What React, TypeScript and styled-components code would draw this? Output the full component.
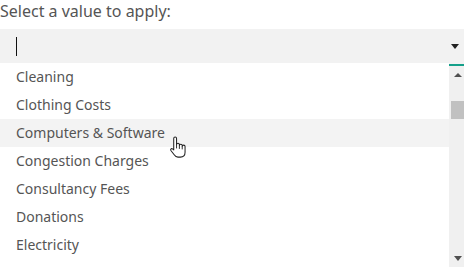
import React from "react";
import styled, { createGlobalStyle } from "styled-components";

const GlobalStyle = createGlobalStyle`
    body {
        margin: 0;
        background: #ffffff;
        font-family: "Noto Sans", "Open Sans", sans-serif;
    }
`

const options = [
    "Cleaning",
    "Clothing Costs",
    "Computers & Software",
    "Congestion Charges",
    "Consultancy Fees",
    "Donations",
    "Electricity",
]

const HandCursor = () => (
    <Hand width="17" height="22" viewBox="0 0 18 23">
        <path
            d="M5 2.5a1.5 1.5 0 0 1 3 0V9a1.5 1.5 0 0 1 3 0v1a1.5 1.5 0 0 1 3 0v1a1.5 1.5 0 0 1 3 0v6c0 3-2 5.2-5 5.2H9.5c-2 0-3-1-4-2.5L2 15.2c-.8-1.2.6-2.6 1.7-1.7L5 14.6Z"
            fill="#ffffff"
            stroke="#222222"
            strokeWidth="1.1"
            strokeLinejoin="round"
        />
        <path d="M8 9v4M11 10v3.5M14 11v3" stroke="#222222" strokeWidth="1" fill="none" />
    </Hand>
)

export default function App() {
    return (
        <>
            <GlobalStyle />
            <Page>
                <Label>Select a value to apply:</Label>
                <Field>
                    <Caret />
                    <Arrow $dir="down" />
                </Field>
                <List>
                    <Options>
                        {options.map((o, i) => (
                            <Option key={o} $active={i === 2}>
                                {o}
                                {i === 2 && <HandCursor />}
                            </Option>
                        ))}
                    </Options>
                    <Scrollbar>
                        <ScrollButton>
                            <Arrow $dir="up" $small />
                        </ScrollButton>
                        <Track>
                            <Thumb />
                        </Track>
                        <ScrollButton>
                            <Arrow $dir="down" $small />
                        </ScrollButton>
                    </Scrollbar>
                </List>
            </Page>
        </>
    );
}

const Page = styled.div`
    width: 464px;
    height: 267px;
    overflow: hidden;
    color: #555555;
`

const Label = styled.div`
    height: 29px;
    font-size: 16px;
    line-height: 22px;
    color: #555555;
`

const Field = styled.div`
    height: 35px;
    background: #f2f2f2;
    border-bottom: 2px solid #15a08a;
    display: flex;
    align-items: center;
    justify-content: space-between;
    padding: 0 5px 0 16px;
`

const Caret = styled.span`
    width: 1px;
    height: 19px;
    background: #111111;
`

const Arrow = styled.span<{ $dir: "up" | "down"; $small?: boolean }>`
    width: 0;
    height: 0;
    border-left: 4px solid transparent;
    border-right: 4px solid transparent;
    ${p => p.$dir === "down"
        ? `border-top: 5px solid ${p.$small ? "#505050" : "#222222"};`
        : `border-bottom: 4px solid #505050;`}
`

const List = styled.div`
    height: 201px;
    display: flex;
    background: #ffffff;
`

const Options = styled.div`
    flex: 1;
    overflow: hidden;
    margin-top: -3px;
`

const Option = styled.div<{ $active?: boolean }>`
    position: relative;
    height: 28px;
    line-height: 28px;
    padding-left: 16px;
    font-size: 14px;
    color: #555555;
    background: ${p => (p.$active ? "#f3f3f3" : "#ffffff")};
`

const Hand = styled.svg`
    position: absolute;
    z-index: 1;
    left: 169px;
    top: 17px;
`

const Scrollbar = styled.div`
    width: 15px;
    background: #f0f0f0;
    display: flex;
    flex-direction: column;
`

const ScrollButton = styled.div`
    height: 17px;
    display: flex;
    align-items: center;
    justify-content: center;
    padding-left: 2px;
`

const Track = styled.div`
    flex: 1;
    padding-top: 18px;
    padding-left: 2px;
`

const Thumb = styled.div`
    height: 18px;
    background: #c1c1c1;
`
